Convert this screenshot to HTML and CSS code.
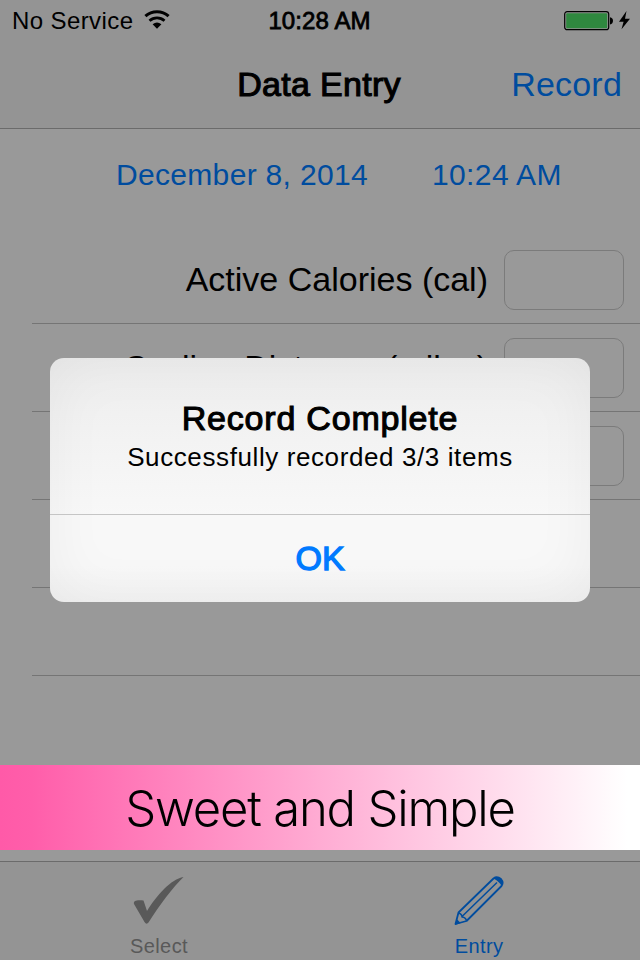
FILE: index.html
```html
<!DOCTYPE html>
<html lang="en">
<head>
<meta charset="utf-8">
<title>Data Entry</title>
<link rel="stylesheet" href="styles.css">
</head>
<body>
<div class="screen">
  <header class="top">
    <div class="status">
      <div class="carrier"><span class="carrier-name">No Service</span>
        <svg class="wifi" width="26" height="19" viewBox="0 0 26 19"><g fill="none" stroke="#000"><path d="M1.400 6.200A17 17 0 0 1 24.600 6.200" stroke-width="3"/><path d="M5.500 10.800A11.200 11.200 0 0 1 20.500 10.800" stroke-width="2.800"/></g><path d="M8.600 14.300Q13 10.500 17.400 14.300L13 18.700Z"/></svg>
      </div>
      <span class="clock">10:28 AM</span>
      <div class="power">
        <svg width="67" height="22" viewBox="0 0 67 22"><rect x="0.7" y="1.7" width="44" height="18" rx="2.5" fill="none" stroke="#000" stroke-width="1.2"/><rect x="2.2" y="3.2" width="41" height="15" rx="1" fill="#2f883f"/><path d="M46 7.2q3 .6 3 3.600t-3 3.600z"/><path d="M62.500 1L55 11.700h4.600L57.500 19.300L66 8.700h-5z"/></svg>
      </div>
    </div>
    <div class="nav">
      <h1 class="nav-title">Data Entry</h1>
      <a class="nav-action">Record</a>
    </div>
  </header>
  <main class="content">
    <div class="when"><span class="date">December 8, 2014</span><span class="time">10:24 AM</span></div>
    <div class="rows">
      <div class="row"><label class="label">Active Calories (cal)</label><div class="field"></div></div>
      <div class="row"><label class="label">Cycling Distance (miles)</label><div class="field"></div></div>
      <div class="row"><div class="field"></div></div>
      <div class="row"></div>
      <div class="row"></div>
    </div>
  </main>
  <div class="banner"><span>Sweet and Simple</span></div>
  <nav class="tabs">
    <div class="tab">
      <svg width="52" height="50" viewBox="0 0 52 50"><path d="M1 29C0 25 5 25 10.500 25.500L14 36C24 20 38 4 50.500 2C40 12 26 31 15.500 47.500Q13.500 50 11.500 47Z" fill="#595959"/></svg>
      <span>Select</span>
    </div>
    <div class="tab tab-active">
      <svg width="52" height="50" viewBox="0 0 52 50"><g fill="none" stroke="#004c9e" stroke-width="1.8" stroke-linejoin="round"><path d="M2.500 49L5.500 37.500L40.500 3.500Q44 .8 48 4Q51 7.500 48.500 11L13.500 46Z"/><path d="M5.500 38Q9 39 9 42Q13 42.500 13.500 46M9 41.500L44 7.500" stroke-width="1.5"/></g><path d="M2 50L3.700 44L7.700 48ZM40.500 3.500Q44 .8 48 4Q51 7.500 48.500 11Q47 7 40.500 3.500Z" fill="#004c9e"/></svg>
      <span>Entry</span>
    </div>
  </nav>
  <section class="alert" role="alertdialog">
    <div class="alert-body">
      <h2 class="alert-title">Record Complete</h2>
      <p class="alert-text">Successfully recorded 3/3 items</p>
    </div>
    <button class="alert-ok">OK</button>
  </section>
</div>
</body>
</html>
```
FILE: styles.css
```css
* { box-sizing: border-box; margin: 0; padding: 0; }
body { font-family: "Liberation Sans", Arial, sans-serif; color: #000; }
h1, h2 { font-weight: 400; }
svg { display: block; flex: none; }

.screen {
  position: relative;
  width: 640px;
  height: 960px;
  display: flex;
  flex-direction: column;
  background: #999;
  overflow: hidden;
  white-space: nowrap;
}

.top { height: 129px; background: #949494; border-bottom: 1px solid #6b6b6b; }
.status {
  height: 41px;
  display: grid;
  grid-template-columns: 1fr auto 1fr;
  align-items: center;
  font-size: 24px;
  padding: 0 9px 0 11px;
}
.carrier { display: flex; align-items: center; gap: 11px; letter-spacing: 0.4px; padding-left: 1px; }
.wifi { margin-top: -2px; }
.clock { letter-spacing: 0.1px; margin-right: 3px; -webkit-text-stroke: 0.8px #000; }
.power { display: flex; justify-content: flex-end; }
.nav {
  height: 87px;
  display: grid;
  grid-template-columns: 1fr auto 1fr;
  align-items: center;
  font-size: 34px;
  padding-right: 18px;
  padding-left: 16px;
}
.nav-title { grid-column: 2; font-size: 34px; letter-spacing: 0.3px; -webkit-text-stroke: 1.1px #000; }
.nav-action { justify-self: end; color: #004c9e; letter-spacing: 0.2px; }

.content { height: 636px; }
.when {
  height: 107px;
  padding: 26px 0 0 116px;
  display: flex;
  gap: 64px;
  line-height: 40px;
  font-size: 30px;
  color: #004c9e;
}
.date { letter-spacing: 0.32px; }
.time { letter-spacing: 0.4px; }
.row {
  height: 88px;
  margin-left: 32px;
  padding: 14px 16px 0 0;
  border-bottom: 1px solid #757575;
  display: flex;
  justify-content: flex-end;
  gap: 16px;
}
.label { font-size: 34px; line-height: 59px; }
.field { width: 120px; height: 60px; border: 1px solid #7b7b7b; border-radius: 10px; }

.banner {
  height: 85px;
  display: flex;
  justify-content: center;
  background: linear-gradient(90deg, #ff5aa8 0%, #ff5eaa 5%, #fff 98%);
  font-family: Inter, "Liberation Sans", sans-serif;
  font-weight: 300;
  font-size: 49px;
  line-height: 87px;
  letter-spacing: -1.2px;
}

.tabs {
  margin-top: 11px;
  height: 99px;
  background: #949494;
  border-top: 1px solid #6b6b6b;
  display: flex;
}
.tab {
  flex: 1;
  display: flex;
  flex-direction: column;
  align-items: center;
  padding: 13px 2px 0 0;
  font-size: 20px;
  line-height: 22px;
  letter-spacing: 0.4px;
  color: #595959;
}
.tab span { margin-top: 10px; }
.tab-active { color: #004c9e; }

.alert {
  position: absolute;
  left: 50px;
  top: 358px;
  width: 540px;
  height: 244px;
  border-radius: 14px;
  background: linear-gradient(180deg, #ededed 0%, #f4f4f4 40%, #f8f8f8 65%, #f8f8f8 85%, #f3f3f3 100%);
  box-shadow: inset 0 0 60px rgba(0, 0, 0, 0.05);
  text-align: center;
}
.alert-body { height: 157px; padding-top: 40px; border-bottom: 1px solid #c5c5c5; }
.alert-title { font-size: 34px; line-height: 40px; letter-spacing: 0.8px; -webkit-text-stroke: 1.1px #000; }
.alert-text { font-size: 26px; line-height: 38px; letter-spacing: 0.6px; }
.alert-ok {
  display: block;
  width: 100%;
  height: 87px;
  border: 0;
  background: none;
  font: 34px/87px "Liberation Sans", Arial, sans-serif;
  color: #007aff;
  -webkit-text-stroke: 1.3px #007aff;
}
```
